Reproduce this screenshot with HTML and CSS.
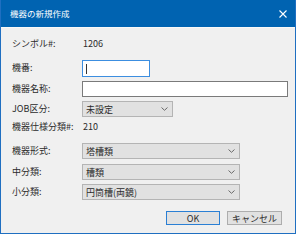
FILE: index.html
```html
<!DOCTYPE html>
<html lang="ja">
<head>
<meta charset="utf-8">
<link rel="stylesheet" href="styles.css">
</head>
<body>
<div class="window">
  <div class="titlebar">
    <span class="title">機器の新規作成</span>
    <svg class="close" width="8" height="8" viewBox="0 0 8 8"><path d="M0.5 0.5 L7.5 7.5 M7.5 0.5 L0.5 7.5" stroke="#fff" stroke-width="1.1" fill="none"/></svg>
  </div>
  <div class="content">
    <div class="row r1"><span class="label">シンボル#:</span><span class="value">1206</span></div>
    <div class="row r2"><span class="label">機番:</span><div class="input focus w-kiban"><span class="caret"></span></div></div>
    <div class="row r3"><span class="label">機器名称:</span><div class="input w-name"></div></div>
    <div class="row r4"><span class="label">JOB区分:</span><div class="select w-job"><span>未設定</span><svg class="chev" width="7" height="4" viewBox="0 0 7 4"><path d="M0.5 0.5 L3.5 3.3 L6.5 0.5" stroke="#6a6a6a" stroke-width="1" fill="none"/></svg></div></div>
    <div class="row r5"><span class="label">機器仕様分類#:</span><span class="value">210</span></div>
    <div class="row r6"><span class="label">機器形式:</span><div class="select w-long"><span>塔槽類</span><svg class="chev" width="7" height="4" viewBox="0 0 7 4"><path d="M0.5 0.5 L3.5 3.3 L6.5 0.5" stroke="#6a6a6a" stroke-width="1" fill="none"/></svg></div></div>
    <div class="row r7"><span class="label">中分類:</span><div class="select w-long"><span>槽類</span><svg class="chev" width="7" height="4" viewBox="0 0 7 4"><path d="M0.5 0.5 L3.5 3.3 L6.5 0.5" stroke="#6a6a6a" stroke-width="1" fill="none"/></svg></div></div>
    <div class="row r8"><span class="label">小分類:</span><div class="select w-long"><span>円筒槽(両鏡)</span><svg class="chev" width="7" height="4" viewBox="0 0 7 4"><path d="M0.5 0.5 L3.5 3.3 L6.5 0.5" stroke="#6a6a6a" stroke-width="1" fill="none"/></svg></div></div>
    <div class="buttons">
      <div class="btn default">OK</div>
      <div class="btn cancel">キャンセル</div>
    </div>
  </div>
</div>
</body>
</html>
```
FILE: styles.css
```css
html, body {
  margin: 0;
  padding: 0;
  background: #ffffff;
}
body {
  font-family: "Noto Sans CJK JP", "Noto Sans", sans-serif;
  font-size: 9px;
  color: #2b2b2b;
}
.window {
  width: 296px;
  height: 234px;
  box-sizing: border-box;
  border: 1px solid #1f6fc1;
  border-top: none;
  display: flex;
  flex-direction: column;
}
.titlebar {
  height: 27px;
  background: #0063b1;
  display: flex;
  align-items: center;
  justify-content: space-between;
  padding: 0 8px 0 9px;
  box-sizing: border-box;
  flex: none;
}
.title {
  color: #ffffff;
  font-size: 8.5px;
  line-height: 1;
}
.close {
  display: block;
  margin-top: 1px;
}
.content {
  flex: 1;
  background: #f0f0f0;
  border-top: 1px solid #f8f8f8;
  padding: 8px 0 0 11px;
  display: flex;
  flex-direction: column;
}
.row {
  display: flex;
  align-items: center;
  height: 16px;
}
.r2 { height: 17px; margin-top: 8px; }
.r3 { margin-top: 4px; }
.r4 { margin-top: 4px; }
.r5 { margin-top: 2px; }
.r6 { margin-top: 8px; }
.r7 { margin-top: 5px; }
.r8 { margin-top: 4px; }
.label {
  width: 70px;
  flex: none;
  line-height: 1;
  margin-top: -2px;
}
.value {
  padding-left: 1px;
  line-height: 1;
  margin-top: -2px;
}
.input {
  height: 100%;
  box-sizing: border-box;
  background: #ffffff;
  border: 1px solid #7a7a7a;
  display: flex;
  align-items: center;
}
.input.focus {
  border-color: #3c8ee0;
}
.caret {
  width: 1px;
  height: 10px;
  background: #333;
  margin-left: 3px;
}
.w-kiban { width: 68px; }
.w-name { width: 206px; }
.w-job { width: 91px; }
.w-long { width: 158px; }
.select {
  height: 100%;
  box-sizing: border-box;
  background: #e1e1e1;
  border: 1px solid #b4b4b4;
  display: flex;
  align-items: center;
  justify-content: space-between;
  padding: 0 4px 0 3px;
}
.select span {
  line-height: 1;
}
.chev {
  display: block;
}
.buttons {
  display: flex;
  justify-content: flex-end;
  gap: 7px;
  margin-top: 11px;
  padding-right: 13px;
}
.btn {
  height: 14px;
  box-sizing: border-box;
  background: #e1e1e1;
  border: 1px solid #adadad;
  display: flex;
  align-items: center;
  justify-content: center;
  line-height: 1;
}
.btn.default {
  width: 54px;
  border-color: #2a7fd4;
}
.btn.cancel {
  width: 55px;
}
```
